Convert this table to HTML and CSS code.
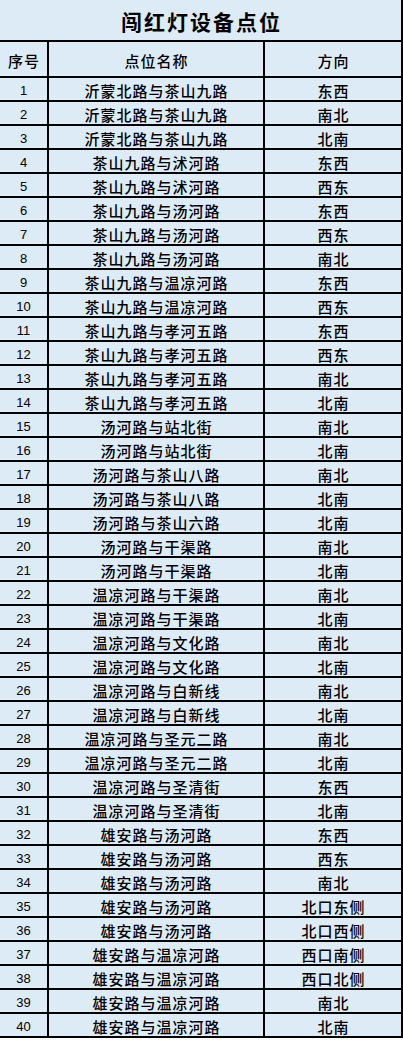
FILE: index.html
```html
<!DOCTYPE html>
<html lang="zh-CN">
<head>
<meta charset="utf-8">
<title>闯红灯设备点位</title>
<link rel="stylesheet" href="styles.css">
</head>
<body>
<div class="sheet">
  <div class="cell title">闯红灯设备点位</div>
  <div class="cell head">序号</div>
  <div class="cell head">点位名称</div>
  <div class="cell head">方向</div>

  <div class="cell num">1</div><div class="cell txt">沂蒙北路与茶山九路</div><div class="cell txt">东西</div>
  <div class="cell num">2</div><div class="cell txt">沂蒙北路与茶山九路</div><div class="cell txt">南北</div>
  <div class="cell num">3</div><div class="cell txt">沂蒙北路与茶山九路</div><div class="cell txt">北南</div>
  <div class="cell num">4</div><div class="cell txt">茶山九路与沭河路</div><div class="cell txt">东西</div>
  <div class="cell num">5</div><div class="cell txt">茶山九路与沭河路</div><div class="cell txt">西东</div>
  <div class="cell num">6</div><div class="cell txt">茶山九路与汤河路</div><div class="cell txt">东西</div>
  <div class="cell num">7</div><div class="cell txt">茶山九路与汤河路</div><div class="cell txt">西东</div>
  <div class="cell num">8</div><div class="cell txt">茶山九路与汤河路</div><div class="cell txt">南北</div>
  <div class="cell num">9</div><div class="cell txt">茶山九路与温凉河路</div><div class="cell txt">东西</div>
  <div class="cell num">10</div><div class="cell txt">茶山九路与温凉河路</div><div class="cell txt">西东</div>
  <div class="cell num">11</div><div class="cell txt">茶山九路与孝河五路</div><div class="cell txt">东西</div>
  <div class="cell num">12</div><div class="cell txt">茶山九路与孝河五路</div><div class="cell txt">西东</div>
  <div class="cell num">13</div><div class="cell txt">茶山九路与孝河五路</div><div class="cell txt">南北</div>
  <div class="cell num">14</div><div class="cell txt">茶山九路与孝河五路</div><div class="cell txt">北南</div>
  <div class="cell num">15</div><div class="cell txt">汤河路与站北街</div><div class="cell txt">南北</div>
  <div class="cell num">16</div><div class="cell txt">汤河路与站北街</div><div class="cell txt">北南</div>
  <div class="cell num">17</div><div class="cell txt">汤河路与茶山八路</div><div class="cell txt">南北</div>
  <div class="cell num">18</div><div class="cell txt">汤河路与茶山八路</div><div class="cell txt">北南</div>
  <div class="cell num">19</div><div class="cell txt">汤河路与茶山六路</div><div class="cell txt">北南</div>
  <div class="cell num">20</div><div class="cell txt">汤河路与干渠路</div><div class="cell txt">南北</div>
  <div class="cell num">21</div><div class="cell txt">汤河路与干渠路</div><div class="cell txt">北南</div>
  <div class="cell num">22</div><div class="cell txt">温凉河路与干渠路</div><div class="cell txt">南北</div>
  <div class="cell num">23</div><div class="cell txt">温凉河路与干渠路</div><div class="cell txt">北南</div>
  <div class="cell num">24</div><div class="cell txt">温凉河路与文化路</div><div class="cell txt">南北</div>
  <div class="cell num">25</div><div class="cell txt">温凉河路与文化路</div><div class="cell txt">北南</div>
  <div class="cell num">26</div><div class="cell txt">温凉河路与白新线</div><div class="cell txt">南北</div>
  <div class="cell num">27</div><div class="cell txt">温凉河路与白新线</div><div class="cell txt">北南</div>
  <div class="cell num">28</div><div class="cell txt">温凉河路与圣元二路</div><div class="cell txt">南北</div>
  <div class="cell num">29</div><div class="cell txt">温凉河路与圣元二路</div><div class="cell txt">北南</div>
  <div class="cell num">30</div><div class="cell txt">温凉河路与圣清街</div><div class="cell txt">东西</div>
  <div class="cell num">31</div><div class="cell txt">温凉河路与圣清街</div><div class="cell txt">北南</div>
  <div class="cell num">32</div><div class="cell txt">雄安路与汤河路</div><div class="cell txt">东西</div>
  <div class="cell num">33</div><div class="cell txt">雄安路与汤河路</div><div class="cell txt">西东</div>
  <div class="cell num">34</div><div class="cell txt">雄安路与汤河路</div><div class="cell txt">南北</div>
  <div class="cell num">35</div><div class="cell txt">雄安路与汤河路</div><div class="cell txt">北口东侧</div>
  <div class="cell num">36</div><div class="cell txt">雄安路与汤河路</div><div class="cell txt">北口西侧</div>
  <div class="cell num">37</div><div class="cell txt">雄安路与温凉河路</div><div class="cell txt">西口南侧</div>
  <div class="cell num">38</div><div class="cell txt">雄安路与温凉河路</div><div class="cell txt">西口北侧</div>
  <div class="cell num">39</div><div class="cell txt">雄安路与温凉河路</div><div class="cell txt">南北</div>
  <div class="cell num">40</div><div class="cell txt">雄安路与温凉河路</div><div class="cell txt">北南</div>
</div>
</body>
</html>
```

FILE: styles.css
```css
html, body {
  margin: 0;
  padding: 0;
  background: #ffffff;
}

.sheet {
  display: grid;
  grid-template-columns: 49px 216px 138px;
  grid-template-rows: 42px 36px;
  grid-auto-rows: 24px;
  width: 403px;
  background: #ddebf7;
  color: #000000;
  font-family: "Noto Sans CJK SC", "Noto Sans", sans-serif;
}

.cell {
  box-sizing: border-box;
  border-right: 2px solid #000000;
  border-bottom: 2px solid #000000;
  display: flex;
  align-items: center;
  justify-content: center;
  white-space: nowrap;
  overflow: hidden;
}

.title {
  grid-column: 1 / 4;
  font-size: 21px;
  font-weight: 700;
  letter-spacing: 2px;
  padding-left: 2px;
  padding-top: 2px;
}

.head {
  font-size: 15px;
  font-weight: 500;
  letter-spacing: 1px;
  padding-left: 1px;
  padding-top: 2px;
}

.txt {
  font-size: 15px;
  font-weight: 500;
  letter-spacing: 1px;
  padding-left: 1px;
  padding-top: 3px;
}

.num {
  font-family: "Liberation Sans", Arial, sans-serif;
  font-size: 13px;
  padding-top: 3px;
}
```
